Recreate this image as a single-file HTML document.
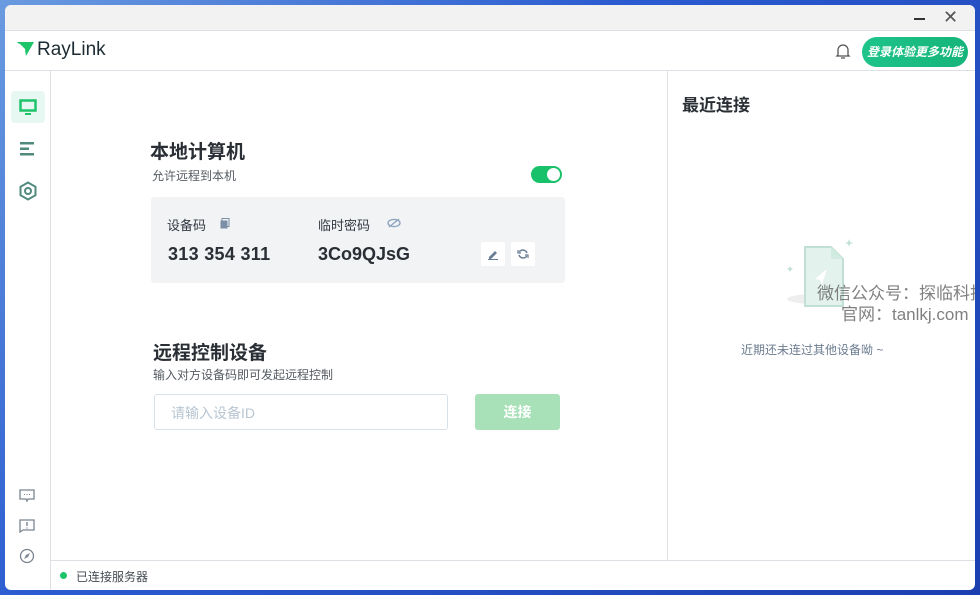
<!DOCTYPE html>
<html><head><meta charset="utf-8"><style>
*{margin:0;padding:0;box-sizing:border-box}
body{width:980px;height:595px;overflow:hidden;background:linear-gradient(135deg,#6a9be0 0%,#2a5bd0 40%,#1c3fb0 100%);font-family:"Liberation Sans","Noto Sans CJK SC",sans-serif;position:relative}
.win{position:absolute;left:5px;top:5px;width:970px;height:585px;background:#fff;border-radius:6px;overflow:hidden}
.title{position:absolute;left:0;top:0;width:100%;height:26px;background:#f2f2f3;border-bottom:1px solid #dde1e6}
.hdr{position:absolute;left:0;top:26px;width:100%;height:40px;border-bottom:1px solid #dde1e6}
.side{position:absolute;left:0;top:66px;width:46px;height:519px;border-right:1px solid #dde1e6}
.right{position:absolute;left:662px;top:66px;width:1px;height:490px;background:#dde1e6}
.foot{position:absolute;left:46px;top:555px;width:924px;height:30px;border-top:1px solid #dde1e6}
.t{position:absolute;white-space:nowrap}
</style></head><body>
<div class="win">
<div class="title"></div>
<div style="position:absolute;left:909px;top:13px;width:11px;height:2px;background:#333"></div>
<div class="t" style="left:938px;top:2px;font-size:18px;color:#555">✕</div>
<div class="hdr"></div>
<svg style="position:absolute;left:12px;top:37px" width="18" height="14" viewBox="0 0 18 14"><path d="M0 0H17L9 14L8 8Z" fill="#1ec46a"/><path d="M2 2L8 8" stroke="#fff" stroke-width="1.5"/></svg>
<div class="t" style="left:32px;top:34px;font-size:19px;color:#1d2b33">RayLink</div>
<svg style="position:absolute;left:830px;top:37px" width="16" height="18" viewBox="0 0 16 18"><path d="M3 13V8a5 5 0 0 1 10 0v5l1 1H2z" fill="none" stroke="#555" stroke-width="1.3"/><path d="M6 16h4" stroke="#555" stroke-width="1.3"/></svg>
<div class="t" style="left:857px;top:32px;width:106px;height:30px;border-radius:15px;background:linear-gradient(90deg,#1ec48a,#15b47a);color:#fff;font-size:12px;font-weight:bold;font-style:italic;text-align:center;line-height:30px">登录体验更多功能</div>
<div class="side"></div>
<div style="position:absolute;left:6px;top:86px;width:34px;height:32px;border-radius:4px;background:#e7f7f1"></div>
<svg style="position:absolute;left:14px;top:94px" width="18" height="16"><rect x="1.5" y="1.5" width="15" height="10" fill="none" stroke="#1ec46a" stroke-width="2.5"/><rect x="6" y="14" width="6" height="2" fill="#1ec46a"/></svg>
<svg style="position:absolute;left:15px;top:136px" width="16" height="16"><rect x="0" y="1" width="14" height="2.5" fill="#4f8a7c"/><rect x="0" y="6.5" width="9" height="2.5" fill="#4f8a7c"/><rect x="0" y="12" width="14" height="2.5" fill="#4f8a7c"/></svg>
<svg style="position:absolute;left:13px;top:176px" width="20" height="20" viewBox="0 0 20 20"><path d="M10 1.5L17.5 5.8V14.2L10 18.5L2.5 14.2V5.8Z" fill="none" stroke="#4f8a7c" stroke-width="2"/><circle cx="10" cy="10" r="3" fill="none" stroke="#4f8a7c" stroke-width="2"/></svg>
<svg style="position:absolute;left:14px;top:484px" width="16" height="14"><path d="M1 1h14v9H9l-1 2-1-2H1z" fill="none" stroke="#7a8590" stroke-width="1.3"/><path d="M5 5.5h1M7.5 5.5h1M10 5.5h1" stroke="#7a8590"/></svg>
<svg style="position:absolute;left:14px;top:514px" width="16" height="14"><path d="M1 1h14v10H4l-3 2z" fill="none" stroke="#7a8590" stroke-width="1.3"/><path d="M8 3v4M8 8.5v1" stroke="#7a8590" stroke-width="1.4"/></svg>
<svg style="position:absolute;left:14px;top:543px" width="16" height="16"><circle cx="8" cy="8" r="6.5" fill="none" stroke="#7a8590" stroke-width="1.3"/><path d="M5 11L7 7L11 5L9 9Z" fill="#7a8590"/></svg>
<div class="right"></div>
<div class="t" style="left:145px;top:132px;font-size:19px;font-weight:bold;color:#2a2f35">本地计算机</div>
<div class="t" style="left:147px;top:162px;font-size:12px;color:#555b62">允许远程到本机</div>
<div style="position:absolute;left:526px;top:161px;width:31px;height:17px;border-radius:9px;background:#19c26a"></div>
<div style="position:absolute;left:542px;top:163px;width:13px;height:13px;border-radius:7px;background:#fff"></div>
<div style="position:absolute;left:146px;top:192px;width:414px;height:86px;background:#f2f3f5;border-radius:3px"></div>
<div class="t" style="left:162px;top:210px;font-size:13px;color:#333a42">设备码</div>
<svg style="position:absolute;left:215px;top:213px" width="10" height="11"><rect x="2" y="0.5" width="7" height="8" fill="none" stroke="#7b8fa6"/><rect x="0.5" y="2.5" width="7" height="8" fill="#7b8fa6"/></svg>
<div class="t" style="left:313px;top:210px;font-size:13px;color:#333a42">临时密码</div>
<svg style="position:absolute;left:382px;top:213px" width="14" height="10"><ellipse cx="7" cy="5" rx="6" ry="3.6" fill="none" stroke="#8fa6c0" stroke-width="1.4"/><path d="M2 9L12 1" stroke="#8fa6c0" stroke-width="1.4"/></svg>
<div class="t" style="left:163px;top:239px;font-size:18px;font-weight:bold;color:#2a2f35;letter-spacing:0.3px">313 354 311</div>
<div class="t" style="left:313px;top:239px;font-size:18px;font-weight:bold;color:#2a2f35">3Co9QJsG</div>
<div style="position:absolute;left:476px;top:237px;width:24px;height:24px;background:#fff;border-radius:2px"></div>
<div style="position:absolute;left:506px;top:237px;width:24px;height:24px;background:#fff;border-radius:2px"></div>
<svg style="position:absolute;left:482px;top:243px" width="12" height="12"><path d="M2 9L8 3L10 5L4 11H2Z" fill="#6b7f96"/><rect x="1" y="11" width="10" height="1" fill="#6b7f96"/></svg>
<svg style="position:absolute;left:512px;top:243px" width="12" height="12"><path d="M10 5A4.3 4.3 0 0 0 2.3 4M2 7A4.3 4.3 0 0 0 9.7 8" fill="none" stroke="#6b7f96" stroke-width="1.5"/><path d="M1 2V5H4M11 10V7H8" fill="none" stroke="#6b7f96" stroke-width="1.2"/></svg>
<div class="t" style="left:148px;top:333px;font-size:19px;font-weight:bold;color:#2a2f35">远程控制设备</div>
<div class="t" style="left:148px;top:361px;font-size:12px;color:#555b62">输入对方设备码即可发起远程控制</div>
<div style="position:absolute;left:149px;top:389px;width:294px;height:36px;border:1px solid #d8e2ea;border-radius:3px"></div>
<div class="t" style="left:166px;top:398px;font-size:14px;color:#b8c6d2">请输入设备ID</div>
<div style="position:absolute;left:470px;top:389px;width:85px;height:36px;background:#a8e0b8;border-radius:3px;color:#fff;font-size:14px;font-weight:bold;text-align:center;line-height:36px">连接</div>
<div class="t" style="left:677px;top:86px;font-size:17px;font-weight:bold;color:#2a2f35">最近连接</div>
<svg style="position:absolute;left:778px;top:228px" width="75" height="80" viewBox="0 0 75 80"><ellipse cx="32" cy="66" rx="28" ry="5" fill="#eee"/><path d="M22 14H48L60 26V73H22Z" fill="#e3f2ec" stroke="#bfe0d2" stroke-width="2"/><path d="M48 14V26H60" fill="#d2ebe0"/><path d="M44 36L32 46L37 47L39 52Z" fill="#fff"/><path d="M66 6l1 3 3 1-3 1-1 3-1-3-3-1 3-1z" fill="#bfe0d2"/><path d="M7 33l1 2 2 1-2 1-1 2-1-2-2-1 2-1z" fill="#bfe0d2"/></svg>
<div class="t" style="left:812px;top:274px;font-size:17px;color:#6a6a6a;opacity:.85">微信公众号：探临科技</div>
<div class="t" style="left:836px;top:295px;font-size:17px;color:#6a6a6a;opacity:.85">官网：tanlkj.com</div>
<div class="t" style="left:736px;top:336px;font-size:12px;color:#6c7c90">近期还未连过其他设备呦 ~</div>
<div class="foot"></div>
<div style="position:absolute;left:55px;top:567px;width:7px;height:7px;border-radius:50%;background:#1ec46a"></div>
<div class="t" style="left:71px;top:563px;font-size:12px;color:#444b52">已连接服务器</div>
</div>
</body></html>
